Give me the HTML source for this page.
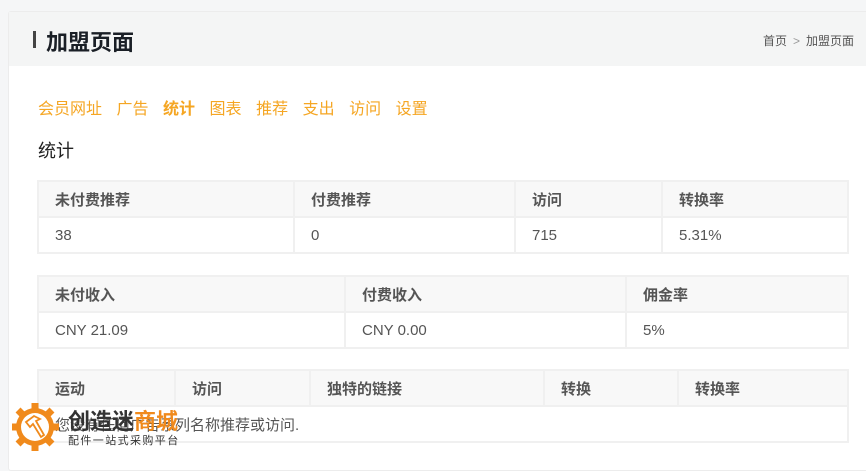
<!DOCTYPE html>
<html><head><meta charset="utf-8"><style>
*{margin:0;padding:0;box-sizing:border-box}
body{width:866px;height:463px;overflow:hidden;background:#f5f6f7;font-family:"Liberation Sans","Noto Sans CJK SC",sans-serif;position:relative}
.card{position:absolute;left:8px;top:11px;width:870px;height:460px;background:#fff;border:1px solid #ececec;border-radius:3px}
.hd{height:54px;background:#f4f5f5;position:relative}
.hd .bar{position:absolute;left:24px;top:19px;width:3px;height:17px;background:#444}
.hd h1{position:absolute;left:37px;top:13px;font-size:22px;font-weight:bold;color:#1a1f26}
.crumb{position:absolute;left:754px;top:20px;font-size:12px;color:#555}
.crumb span{color:#999;margin:0 6px}
.nav{position:absolute;left:29px;top:83px;font-size:16px;color:#f5a623}
.nav a,.nav b{margin-right:14.5px}
.ttl{position:absolute;left:29px;top:125px;font-size:18px;color:#222}
table{position:absolute;left:28px;border-collapse:collapse;width:812px;font-size:15px;color:#555}
td,th{border:2px solid #f0f0f0;height:36px;text-align:left;padding-left:16px;font-weight:normal}
th{background:#f8f8f8;font-weight:bold}
.logo{position:absolute;left:12px;top:402px}
</style></head><body>
<div class="card">
<div class="hd"><div class="bar"></div><h1>加盟页面</h1><div class="crumb">首页<span>&gt;</span>加盟页面</div></div>
<div class="nav"><a>会员网址</a><a>广告</a><b>统计</b><a>图表</a><a>推荐</a><a>支出</a><a>访问</a><a>设置</a></div>
<div class="ttl">统计</div>
<table style="top:168px"><tr><th style="width:256px">未付费推荐</th><th style="width:221px">付费推荐</th><th style="width:147px">访问</th><th>转换率</th></tr>
<tr><td>38</td><td>0</td><td>715</td><td>5.31%</td></tr></table>
<table style="top:263px"><tr><th style="width:307px">未付收入</th><th style="width:281px">付费收入</th><th>佣金率</th></tr>
<tr><td>CNY 21.09</td><td>CNY 0.00</td><td>5%</td></tr></table>
<table style="top:357px"><tr><th style="width:137px">运动</th><th style="width:135px">访问</th><th style="width:234px">独特的链接</th><th style="width:134px">转换</th><th>转换率</th></tr>
<tr><td colspan="5">您没有任何广告系列名称推荐或访问.</td></tr></table>
</div>
<div class="logo">
<svg width="48" height="50" viewBox="0 0 48 50"><g fill="#f08a1c"><circle cx="23" cy="25" r="19"/>
<g transform="translate(23 25)"><rect x="-3.5" y="-24" width="7" height="8"/><rect x="-3.5" y="-24" width="7" height="8" transform="rotate(45)"/><rect x="-3.5" y="-24" width="7" height="8" transform="rotate(90)"/><rect x="-3.5" y="-24" width="7" height="8" transform="rotate(135)"/><rect x="-3.5" y="-24" width="7" height="8" transform="rotate(180)"/><rect x="-3.5" y="-24" width="7" height="8" transform="rotate(225)"/><rect x="-3.5" y="-24" width="7" height="8" transform="rotate(270)"/><rect x="-3.5" y="-24" width="7" height="8" transform="rotate(315)"/></g></g>
<circle cx="23" cy="25" r="14" fill="#fff"/><path d="M14 20l8-6 6 3-4 2 8 14-3 2-8-13-3 3z" fill="none" stroke="#f08a1c" stroke-width="1.8"/></svg>
<div style="position:absolute;left:56px;top:2px;font-size:22px;font-weight:bold;white-space:nowrap;color:#333">创造迷<span style="color:#f08a1c">商城</span></div>
<div style="position:absolute;left:56px;top:30px;font-size:11px;white-space:nowrap;color:#333;letter-spacing:1.4px">配件一站式采购平台</div>
</div>
</body></html>
